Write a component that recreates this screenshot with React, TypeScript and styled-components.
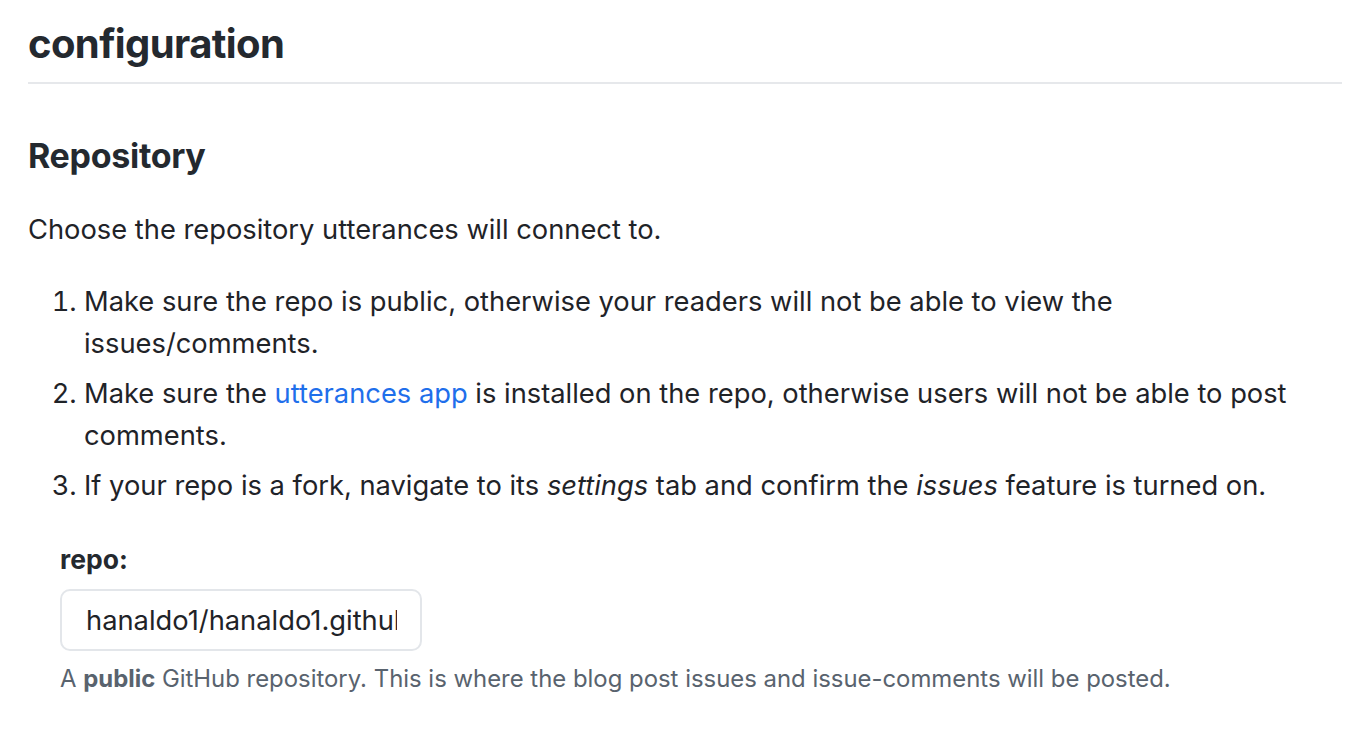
import { createGlobalStyle } from 'styled-components';
import styled from 'styled-components';

const GlobalStyle = createGlobalStyle`
    html, body {
        margin: 0;
        padding: 0;
        background: #ffffff;
    }
    body {
        font-family: Inter, "Noto Sans", "Liberation Sans", sans-serif;
        color: #1f2328;
        -webkit-font-smoothing: antialiased;
    }
`;

const Page = styled.main`
    padding: 18px 8px 40px 28px;
    font-size: 27.3px;
    line-height: 42px;
`;

const Title = styled.h2`
    margin: 0;
    font-size: 40px;
    line-height: 52px;
    font-weight: 700;
    letter-spacing: -0.6px;
    color: #24292f;
    padding-bottom: 12px;
    border-bottom: 2px solid #e6e8eb;
`;

const SubTitle = styled.h3`
    margin: 50px 0 0;
    font-size: 34px;
    line-height: 44px;
    font-weight: 700;
    letter-spacing: -0.3px;
    color: #24292f;
`;

const Paragraph = styled.p`
    margin: 31px 0 0;
`;

const Steps = styled.ol`
    margin: 30px 0 0;
    padding-left: 56px;
`;

const Step = styled.li`
    & + & {
        margin-top: 8px;
    }
`;

const Link = styled.a`
    color: #1f6feb;
    text-decoration: none;
`;

const Field = styled.div`
    margin: 33px 0 0 32px;
    display: flex;
    flex-direction: column;
    align-items: flex-start;
`;

const Label = styled.label`
    font-size: 26.5px;
    line-height: 38px;
    font-weight: 700;
    color: #24292f;
`;

const TextInput = styled.input`
    margin-top: 11px;
    box-sizing: border-box;
    width: 362px;
    height: 62px;
    padding: 0 23px 0 24px;
    border: 2px solid #e3e6ea;
    border-radius: 10px;
    font-family: inherit;
    font-size: 27.3px;
    color: #1f2328;
    background: #ffffff;
    outline: none;
`;

const Note = styled.p`
    margin: 10px 0 0;
    font-size: 23.9px;
    line-height: 36px;
    color: #59636e;

    strong {
        color: #59636e;
        font-weight: 700;
    }
`;

export default function App() {
    return (
        <>
            <GlobalStyle />
            <Page>
                <Title>configuration</Title>
                <SubTitle>Repository</SubTitle>
                <Paragraph>Choose the repository utterances will connect to.</Paragraph>
                <Steps>
                    <Step>
                        Make sure the repo is public, otherwise your readers will not be able to view the
                        <br />
                        issues/comments.
                    </Step>
                    <Step>
                        Make sure the <Link href="#">utterances app</Link> is installed on the repo,
                        otherwise users will not be able to post
                        <br />
                        comments.
                    </Step>
                    <Step>
                        If your repo is a fork, navigate to its <em>settings</em> tab and confirm the{' '}
                        <em>issues</em> feature is turned on.
                    </Step>
                </Steps>
                <Field>
                    <Label htmlFor="repo">repo:</Label>
                    <TextInput id="repo" type="text" readOnly value="hanaldo1/hanaldo1.github.io" />
                    <Note>
                        A <strong>public</strong> GitHub repository. This is where the blog post issues
                        and issue-comments will be posted.
                    </Note>
                </Field>
            </Page>
        </>
    );
}
